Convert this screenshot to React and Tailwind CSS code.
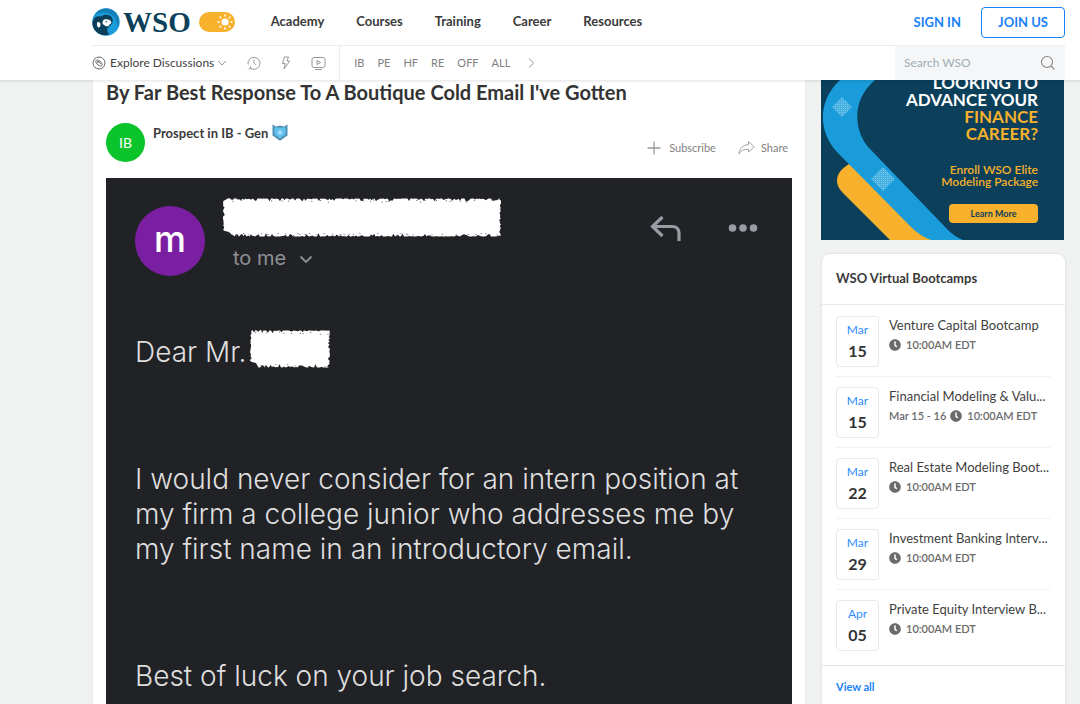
import React from 'react';
import { FaClock } from 'react-icons/fa';

const NAV_LINKS = ['Academy', 'Courses', 'Training', 'Career', 'Resources'];

const FORUMS = ['IB', 'PE', 'HF', 'RE', 'OFF', 'ALL'];

const BOOTCAMPS = [
  { month: 'Mar', day: '15', title: 'Venture Capital Bootcamp', time: '10:00AM EDT' },
  { month: 'Mar', day: '15', title: 'Financial Modeling & Valu...', range: 'Mar 15 - 16', time: '10:00AM EDT' },
  { month: 'Mar', day: '22', title: 'Real Estate Modeling Boot...', time: '10:00AM EDT' },
  { month: 'Mar', day: '29', title: 'Investment Banking Interv...', time: '10:00AM EDT' },
  { month: 'Apr', day: '05', title: 'Private Equity Interview B...', time: '10:00AM EDT' },
];

function LogoMark() {
  return (
    <svg className="h-7 w-7 shrink-0" viewBox="0 0 28 28" aria-hidden="true">
      <circle cx="14" cy="14" r="13.7" fill="#1a9cdb" />
      <path d="M3 7c4-7.500 15-8.500 20.500-2.500C27 8 28 14 26 19c-1.500-6-3-10-7-12.500C14 3.500 8 4 3 7z" fill="#1580b8" />
      <path d="M4 23.400C.8 20.400-.4 16.600.9 12.600 2.500 8.500 6 7.500 9 8.500c2.500-2.300 8-2.500 10.500.4 1.800 2.200 1.800 5-.2 7.500-1.500 1.800-3.300 2.300-3.900 4.200-.6 2.100.5 4.200 1.800 6.100-4.900 1-9.600.4-13.200-3.300z" fill="#0b3f5a" />
      <path d="M10.500 14.500c.2-2.500 1.700-3.500 3.500-3.300 1.800-.3 3.500.5 4.800 1.800 1.100 1.200.4 2.800-1 3.200-.6 1.400-2 2.400-3.400 2-1.300.2-1.800-1-2.500-1.400-1-.4-1.400-1.200-1.400-2.300z" fill="#fff" />
      <path d="M5.600 14.200c1.500-.6 2.900.4 2.900 2.200.1 1.800-.9 3.200-2.100 3-1.300-.3-2.100-4.500-.8-5.200z" fill="#fff" />
      <circle cx="14.200" cy="13.700" r=".8" fill="#0b3f5a" />
    </svg>
  );
}

function ThemeToggle() {
  return (
    <button type="button" aria-label="Toggle theme" className="ml-2 flex h-5 w-9 items-center justify-end rounded-full bg-[#f7b12c] pr-0.5">
      <svg className="h-4 w-4" viewBox="0 0 16 16" fill="none" stroke="#fff" strokeWidth="1.500" strokeLinecap="round">
        <circle cx="8" cy="8" r="3.600" fill="#fff" stroke="none" />
        <path d="M8 .9v1.200M8 13.900v1.200M.9 8h1.200M13.900 8h1.200M3 3l.8.8M12.200 12.200l.8.8M13 3l-.8.8M3.800 12.200l-.8.8" />
      </svg>
    </button>
  );
}

function Header() {
  return (
    <header className="relative z-10 shrink-0 bg-white pl-[92px] pr-[15px] shadow-[0_1px_3px_rgba(0,0,0,0.12)]">
      <div className="flex h-[46px] items-center justify-between border-b border-[#ededed]">
        <div className="flex items-center pb-0.5">
          <a href="#home" aria-label="WSO" className="flex items-center gap-[3px]">
            <LogoMark />
            <span className="font-['Liberation_Serif',serif] text-[29px] font-bold leading-7 text-[#0b3f5a]">WSO</span>
          </a>
          <ThemeToggle />
          <nav className="ml-9 flex gap-8 pb-0.5 text-[13px] font-bold leading-5 text-[#3a3a3a]">
            {NAV_LINKS.map((link) => (
              <a key={link} href={`#${link}`}>{link}</a>
            ))}
          </nav>
        </div>
        <div className="flex items-center text-[13px] font-bold text-[#1a82f7]">
          <a href="#signin" className="mr-5">SIGN IN</a>
          <a href="#join" className="flex h-[31px] w-[84px] items-center justify-center rounded border border-[#1a82f7]">JOIN US</a>
        </div>
      </div>

      <div className="flex h-[34px] justify-between">
        <div className="flex items-center">
          <button type="button" className="flex items-center text-xs leading-4 text-[#3f3f3f]">
            <svg className="mr-1 h-[14px] w-[14px]" viewBox="0 0 14 14" fill="none" stroke="#666">
              <circle cx="7" cy="7" r="6" />
              <path d="M4 6.500C3.400 5 4 4 5.200 4c1.500-.1 4.300 2.100 4.800 3.600.5 1.400-.1 2.500-1.300 2.400C7.200 10 4.500 8 4 6.500z" />
              <path d="M5.200 5.200c1.200 0 3 1.600 3.600 3M5 7.200C5.200 5.800 6 5.700 7 6.200" />
            </svg>
            Explore Discussions
            <svg className="ml-0.5 h-3 w-3" viewBox="0 0 12 12" fill="none" stroke="#999">
              <path d="M2 4l4 4 4-4" />
            </svg>
          </button>
          <button type="button" aria-label="Recent" className="ml-[19px]">
            <svg className="h-[14px] w-[14px]" viewBox="0 0 14 14" fill="none" stroke="#8c8c8c" strokeWidth=".9">
              <path d="M3.500 12.200A6 6 0 1 0 1.100 8.500M1.700 13.100l2-.7-.3-2.200M7 3.500V7l1.800 1.800" />
            </svg>
          </button>
          <button type="button" aria-label="Trending" className="ml-[18px]">
            <svg className="h-[14px] w-[14px]" viewBox="0 0 14 14" fill="none" stroke="#8c8c8c" strokeWidth=".9" strokeLinejoin="round">
              <path d="M5.500 1h4L8 5h2.700L5 13l1.300-5.500H3.500z" />
            </svg>
          </button>
          <button type="button" aria-label="Videos" className="ml-[18px]">
            <svg className="h-[15px] w-[15px]" viewBox="0 0 15 15" fill="none" stroke="#8c8c8c" strokeWidth=".9">
              <rect x="1" y="1.500" width="13" height="10" rx="2" />
              <path d="M6 4.500v4l3.500-2zM4 13.500h7" />
            </svg>
          </button>
          <nav className="ml-[13px] flex h-full items-center gap-[13px] border-l border-[#ededed] pl-[14px] text-[11px] leading-4 text-[#808080]">
            {FORUMS.map((forum) => (
              <a key={forum} href={`#${forum}`}>{forum}</a>
            ))}
            <button type="button" aria-label="More forums" className="ml-0.5">
              <svg className="h-3 w-3" viewBox="0 0 12 12" fill="none" stroke="#999">
                <path d="M4 1.500L8.500 6 4 10.500" />
              </svg>
            </button>
          </nav>
        </div>
        <label className="flex w-[170px] items-center bg-[#f5f6f8] px-[9px]">
          <input
            type="text"
            aria-label="Search WSO"
            placeholder="Search WSO"
            className="min-w-0 flex-1 bg-transparent text-xs outline-none placeholder:text-[#9fadb3]"
          />
          <svg className="h-4 w-4 shrink-0" viewBox="0 0 16 16" fill="none" stroke="#888" strokeWidth="1.100">
            <circle cx="7" cy="7" r="5.500" />
            <path d="M11 11l3.500 3.500" />
          </svg>
        </label>
      </div>
    </header>
  );
}

// Repeatable pseudo random numbers, so that the torn edge is the same on each render
function noise(seed) {
  const n = Math.sin(seed * 127.1) * 43758.5453;
  return n - Math.floor(n);
}

// White patch with torn edges, covers names in the email
function Redaction({ width, height, className }) {
  const points = [];
  let s = width;
  for (let x = 12; x < width; x += 1.5) points.push([x, 0.5 + noise(s++) ** 4 * 3]);
  for (let y = 1; y < height; y += 1.5) points.push([width - noise(s++) ** 2 * 2.5, y]);
  for (let x = width - 1; x > 7; x -= 1.5) points.push([x, height - 0.5 - noise(s++) ** 4 * 3.5]);
  points.push([6, height - 5], [2, height - 6]);
  for (let y = height - 7; y > 1; y -= 1.5) points.push([noise(s++) ** 2 * 2, y]);
  for (let x = 1; x < 12; x += 1.5) points.push([x, noise(s++) ** 2 * 3]);

  const specks = [];
  for (let x = 4; x < width - 3; x += 4) {
    const top = noise(s++) > 0.5;
    const d = 1.5 + noise(s++) * 2.5;
    specks.push({ x: x + noise(s++) * 3, y: top ? d : height - d });
  }

  return (
    <svg className={className} viewBox={`0 0 ${width} ${height}`} aria-hidden="true">
      <polygon points={points.map((p) => p.join(',')).join(' ')} fill="#fff" />
      {specks.map((p, i) => (
        <rect key={i} x={p.x} y={p.y} width="1.200" height=".8" fill="#55565a" />
      ))}
    </svg>
  );
}

function EmailShot() {
  return (
    <div className="mt-4 bg-[#212226] pb-16 pl-[29px] pr-7 pt-5 font-['Inter',sans-serif] text-[28px] font-light leading-[35px] text-[#dedede]">
      <div className="flex justify-between">
        <div className="flex">
          <div className="mt-2 flex h-[70px] w-[70px] items-center justify-center rounded-full bg-[#7b1fa2] pb-1 text-[36px] font-medium text-white">m</div>
          <div className="ml-[18px]">
            <Redaction width={278} height={39} className="h-[39px] w-[278px]" />
            <div className="ml-[10px] mt-1 flex items-center gap-2 text-xl font-normal leading-[35px] text-[#8f9097]">
              to me
              <svg className="ml-1 h-4 w-4" viewBox="0 0 16 16" fill="none" stroke="#8f9097" strokeWidth="1.800">
                <path d="M2.500 5.500L8 11l5.500-5.500" />
              </svg>
            </div>
          </div>
        </div>
        <div className="mr-1.5 mt-[17px] flex h-7 items-center gap-[46px]">
          <svg className="h-7 w-8" viewBox="0 0 32 28" fill="none" stroke="#9a9ba3" strokeWidth="3.200">
            <path d="M12.500 2L2.500 11.500l10 9.500M3 11.500h19q7 0 7 7V26" />
          </svg>
          <svg className="h-7 w-[30px]" viewBox="0 0 30 28" fill="#9a9ba3">
            <circle cx="4.500" cy="13" r="3.800" />
            <circle cx="15" cy="13" r="3.800" />
            <circle cx="25.500" cy="13" r="3.800" />
          </svg>
        </div>
      </div>
      <div className="mt-[59px] flex h-[35px] items-center gap-1">
        Dear Mr.
        <Redaction width={80} height={38} className="mb-2 h-[38px] w-20" />
      </div>
      <p className="mt-[92px]">
        I would never consider for an intern position at<br />
        my firm a college junior who addresses me by<br />
        my first name in an introductory email.
      </p>
      <p className="mt-[92px]">Best of luck on your job search.</p>
    </div>
  );
}

function Post() {
  return (
    <main className="min-w-0 flex-1 bg-white px-[13px] shadow-[0_0_2px_rgba(0,0,0,0.08)]">
      <h1 className="text-xl font-bold leading-6 text-[#333]">By Far Best Response To A Boutique Cold Email I've Gotten</h1>
      <div className="mt-[19px] flex h-[39px] justify-between">
        <div className="flex">
          <div className="flex h-[39px] w-[39px] items-center justify-center rounded-full bg-[#0bc42b] text-sm text-white">IB</div>
          <div className="ml-2 flex h-[21px] items-center gap-1 text-[13px] font-bold text-[#3a3a3a]">
            Prospect in IB - Gen
            <svg className="mb-0.5 h-[17px] w-4" viewBox="0 0 16 17" aria-hidden="true">
              <path d="M.5.5l3.500 2L8 1.500l4 1 3.500-2V11.500L8 16.800.5 11.500z" fill="#4f8fb5" />
              <path d="M2.500 3.200L8 3.800l5.500-.6v7.300L8 14.500l-5.500-4z" fill="#5fc0ee" />
              <circle cx="8" cy="8.500" r="1.600" fill="none" stroke="#e4f5fd" />
            </svg>
          </div>
        </div>
        <div className="mr-1 flex items-center gap-[22px] self-end pb-1 text-[11px] leading-5 text-[#808080]">
          <button type="button" className="flex items-center gap-2">
            <svg className="h-[14px] w-[14px]" viewBox="0 0 14 14" fill="none" stroke="#999" strokeWidth="1.300">
              <path d="M7 .5v13M.5 7h13" />
            </svg>
            Subscribe
          </button>
          <button type="button" className="flex items-center gap-1.5">
            <svg className="h-4 w-[17px]" viewBox="0 0 17 16" fill="none" stroke="#a3a3a3" strokeLinejoin="round">
              <path d="M10.500 1.500l5.800 5.300-5.800 5.200V9.300C6 9 3 10.500.8 14 1.500 8.500 5 5 10.500 4.600z" />
            </svg>
            Share
          </button>
        </div>
      </div>
      <EmailShot />
    </main>
  );
}

function PromoBanner() {
  return (
    <a href="#elite" className="relative -ml-px flex h-40 w-[243px] max-w-full flex-col items-end justify-end overflow-hidden bg-[#0b3f5a] pb-[17px] pr-[26px] text-right">
      <svg className="absolute inset-0 h-full w-full" viewBox="0 0 243 160" preserveAspectRatio="xMinYMax slice" aria-hidden="true">
        <defs>
          <pattern id="mesh" width="2" height="2" patternUnits="userSpaceOnUse">
            <rect width="2" height="2" fill="#45b0e2" />
            <rect width="1" height="1" fill="#7cc8ec" />
          </pattern>
        </defs>
        <path d="M28 84C20 89 16 94 16 101q0 6 6 12l47 47h44z" fill="#f7b12c" />
        <path d="M19 0C-2 19-4 49 15 71l75 76q9 9 20 13h32q-8-3-15-10L50 70C32 52 30 20 54 0z" fill="#1a9cdb" />
        <path d="M21 17l10 10-10 10-10-10zM62 87l12 12-12 12-12-12z" fill="url(#mesh)" />
      </svg>
      <p className="relative shrink-0 text-[17px] font-bold leading-[17px] text-white">
        LOOKING TO<br />
        ADVANCE YOUR<br />
        <span className="text-[#f7b12c]">FINANCE<br />CAREER?</span>
      </p>
      <p className="relative mt-[22px] shrink-0 text-xs font-semibold leading-3 text-[#f7b12c]">
        Enroll WSO Elite<br />
        Modeling Package
      </p>
      <span className="relative mt-4 flex h-[19px] w-[89px] shrink-0 items-center justify-center rounded-sm bg-[#f7b12c] text-[9px] font-bold text-[#0b3f5a]">Learn More</span>
    </a>
  );
}

function Bootcamps() {
  return (
    <section className="mt-[14px] rounded-lg bg-white shadow-[0_0_3px_rgba(0,0,0,0.12)]">
      <h2 className="flex h-[51px] items-center border-b border-[#ebebeb] px-[14px] text-[13px] font-bold text-[#3a3a3a]">WSO Virtual Bootcamps</h2>
      <ul className="px-[14px] pb-1 pt-px">
        {BOOTCAMPS.map((camp) => (
          <li key={camp.title} className="flex h-[71px] items-center gap-[10px] border-b border-[#f3f3f3] last:border-transparent">
            <div className="flex h-[51px] w-[43px] shrink-0 flex-col items-center justify-center rounded-sm border border-[#e8e8e8]">
              <span className="text-xs leading-5 text-[#2d8cff]">{camp.month}</span>
              <span className="text-base font-bold leading-[22px] text-[#333]">{camp.day}</span>
            </div>
            <div className="min-w-0 pb-3">
              <a href="#bootcamp" className="block whitespace-nowrap text-[13px] leading-5 text-[#3f3f3f]">{camp.title}</a>
              <div className="flex items-center text-[11px] font-semibold leading-5 text-[#6b6b6b]">
                {camp.range && <span className="mr-1">{camp.range}</span>}
                <FaClock className="mr-[5px] h-3 w-3" />
                {camp.time}
              </div>
            </div>
          </li>
        ))}
      </ul>
      <div className="flex h-[43px] items-center border-t border-[#e6e6e6] px-[14px]">
        <a href="#all" className="text-[11px] font-bold text-[#1a82f7]">View all</a>
      </div>
      <div className="h-10" />
    </section>
  );
}

function App() {
  return (
    <div className="flex h-screen flex-col overflow-hidden bg-[#f0f2f1] font-['Lato',sans-serif]">
      <Header />
      <div className="flex min-h-0 flex-1 items-start gap-[17px] pl-[93px] pr-[15px]">
        <Post />
        <aside className="w-[243px] shrink-0">
          <PromoBanner />
          <Bootcamps />
        </aside>
      </div>
    </div>
  );
}

export default App;
